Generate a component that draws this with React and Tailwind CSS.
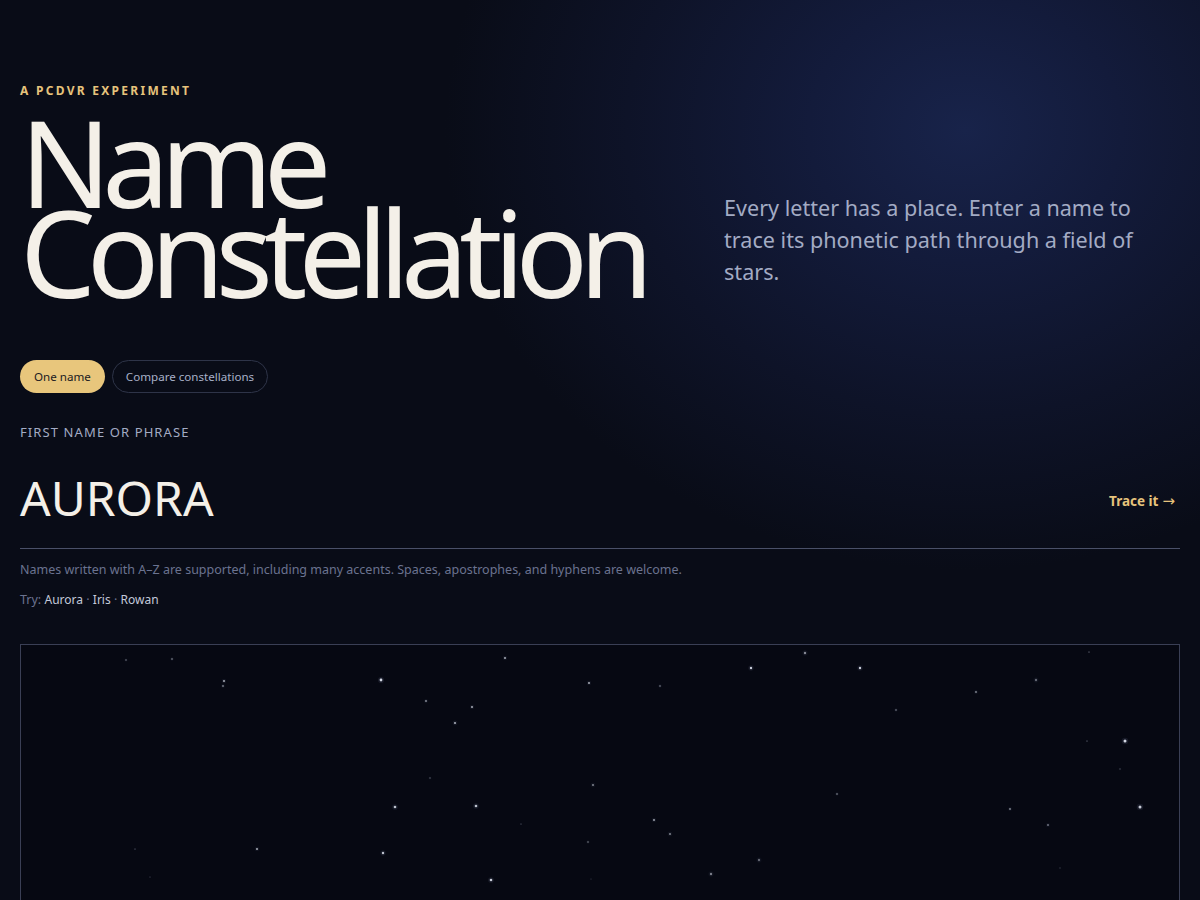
import React from "react";

const stars = [
  [126, 660, 0.7, 0.55], [172, 659, 0.8, 0.6], [224, 681, 1, 0.7], [223, 686, 0.9, 0.5],
  [381, 680, 1.4, 0.9], [395, 807, 1.3, 0.8], [257, 849, 1, 0.7], [383, 853, 1.2, 0.8],
  [135, 849, 0.6, 0.4], [150, 877, 0.6, 0.25],
  [505, 658, 1, 0.7], [589, 683, 1, 0.7], [660, 686, 0.8, 0.55], [751, 668, 1.2, 0.85],
  [426, 701, 0.9, 0.6], [472, 707, 1, 0.7], [455, 723, 1.1, 0.7], [430, 778, 0.7, 0.4],
  [593, 785, 1.1, 0.5], [476, 806, 1.3, 0.8], [521, 824, 0.6, 0.35], [654, 820, 1, 0.65],
  [670, 834, 1.1, 0.5], [588, 842, 0.8, 0.5], [759, 860, 1.2, 0.4], [711, 874, 1.2, 0.5],
  [491, 880, 1.3, 0.85], [591, 879, 0.6, 0.2],
  [805, 653, 1.2, 0.55], [860, 668, 1.2, 0.85], [896, 710, 0.8, 0.55], [976, 692, 0.9, 0.55],
  [1036, 680, 1.2, 0.4], [1089, 652, 0.6, 0.5], [1087, 741, 0.6, 0.45], [1125, 741, 1.5, 0.9],
  [1120, 769, 0.7, 0.3], [1140, 807, 1.5, 0.85], [837, 794, 0.8, 0.6], [1010, 809, 0.9, 0.55],
  [1048, 825, 1, 0.45], [1060, 868, 0.7, 0.2],
];

export default function App() {
  return (
    <div
      className="min-h-[900px] w-full bg-[#090c17] text-[#f3efe6] overflow-hidden"
      style={{
        fontFamily: '"Noto Sans", "Open Sans", sans-serif',
        backgroundImage:
          "radial-gradient(ellipse 520px 440px at 965px 130px, #18234a 0%, #131b3b 30%, #0e1328 65%, #090c17 100%)",
      }}
    >
      <div className="px-5 pt-[83px]">
        <div className="flex items-start">
          <div className="w-[704px] shrink-0">
            <div className="text-[12px] font-bold tracking-[0.19em] text-[#e6c37c] leading-4">
              A PCDVR EXPERIMENT
            </div>
            <h1 className="mt-[18px] text-[120px] leading-[90px] tracking-[-0.075em] font-normal text-[#f4f0e8] pb-[10px]">
              <span className="block">Name</span>
              <span className="block">Constellation</span>
            </h1>
          </div>
          <p className="mt-[109px] w-[430px] text-[21.6px] leading-[32px] text-[#a3abc4]">
            Every letter has a place. Enter a name to trace its phonetic path through a field of stars.
          </p>
        </div>

        <div className="mt-[53px] flex gap-[7px]">
          <button className="h-[33px] px-[14px] rounded-full bg-[#e8c67c] text-[#1a1a22] text-[11.6px]">
            One name
          </button>
          <button className="h-[33px] px-[13px] rounded-full border border-[#2e3448] text-[#a8b0c8] text-[11.6px]">
            Compare constellations
          </button>
        </div>

        <div className="mt-[29px] text-[13px] tracking-[0.085em] text-[#a3abc4] leading-5">
          FIRST NAME OR PHRASE
        </div>

        <div className="mt-[27px] flex items-center justify-between border-b border-[#4a5068] pb-[21px]">
          <div className="text-[48px] leading-[58px] text-[#f4f0e8]">AURORA</div>
          <div className="text-[13.5px] font-bold text-[#e6c37c] pr-[5px] pt-[6px] flex items-center gap-[4px]">
            <span>Trace it</span>
            <span
              className="text-[15px] leading-none font-normal"
              style={{ fontFamily: '"DejaVu Sans", sans-serif' }}
            >
              →
            </span>
          </div>
        </div>

        <div className="mt-[12px] text-[12.5px] leading-[18px] text-[#6b7390]">
          Names written with A–Z are supported, including many accents. Spaces, apostrophes, and hyphens are welcome.
        </div>
        <div className="mt-[12px] text-[12.5px] leading-[18px] text-[#6b7390]">
          Try: <span className="text-[#c3c9da] text-[12px]">Aurora</span> · <span className="text-[#c3c9da] text-[12px]">Iris</span> ·{" "}
          <span className="text-[#c3c9da] text-[12px]">Rowan</span>
        </div>

        <div className="mt-[35px] relative h-[520px] border border-[#3a3f55] bg-[#060812]">
          <svg className="absolute inset-0 w-full h-full">
            {stars.map(([x, y, r, o], i) => (
              <g key={i}>
                <circle cx={x - 21} cy={y - 645} r={r * 2.2} fill="#9aa6d0" opacity={o * 0.12} />
                <circle cx={x - 21} cy={y - 645} r={r} fill="#e8ecf8" opacity={o} />
              </g>
            ))}
          </svg>
        </div>
      </div>
    </div>
  );
}
